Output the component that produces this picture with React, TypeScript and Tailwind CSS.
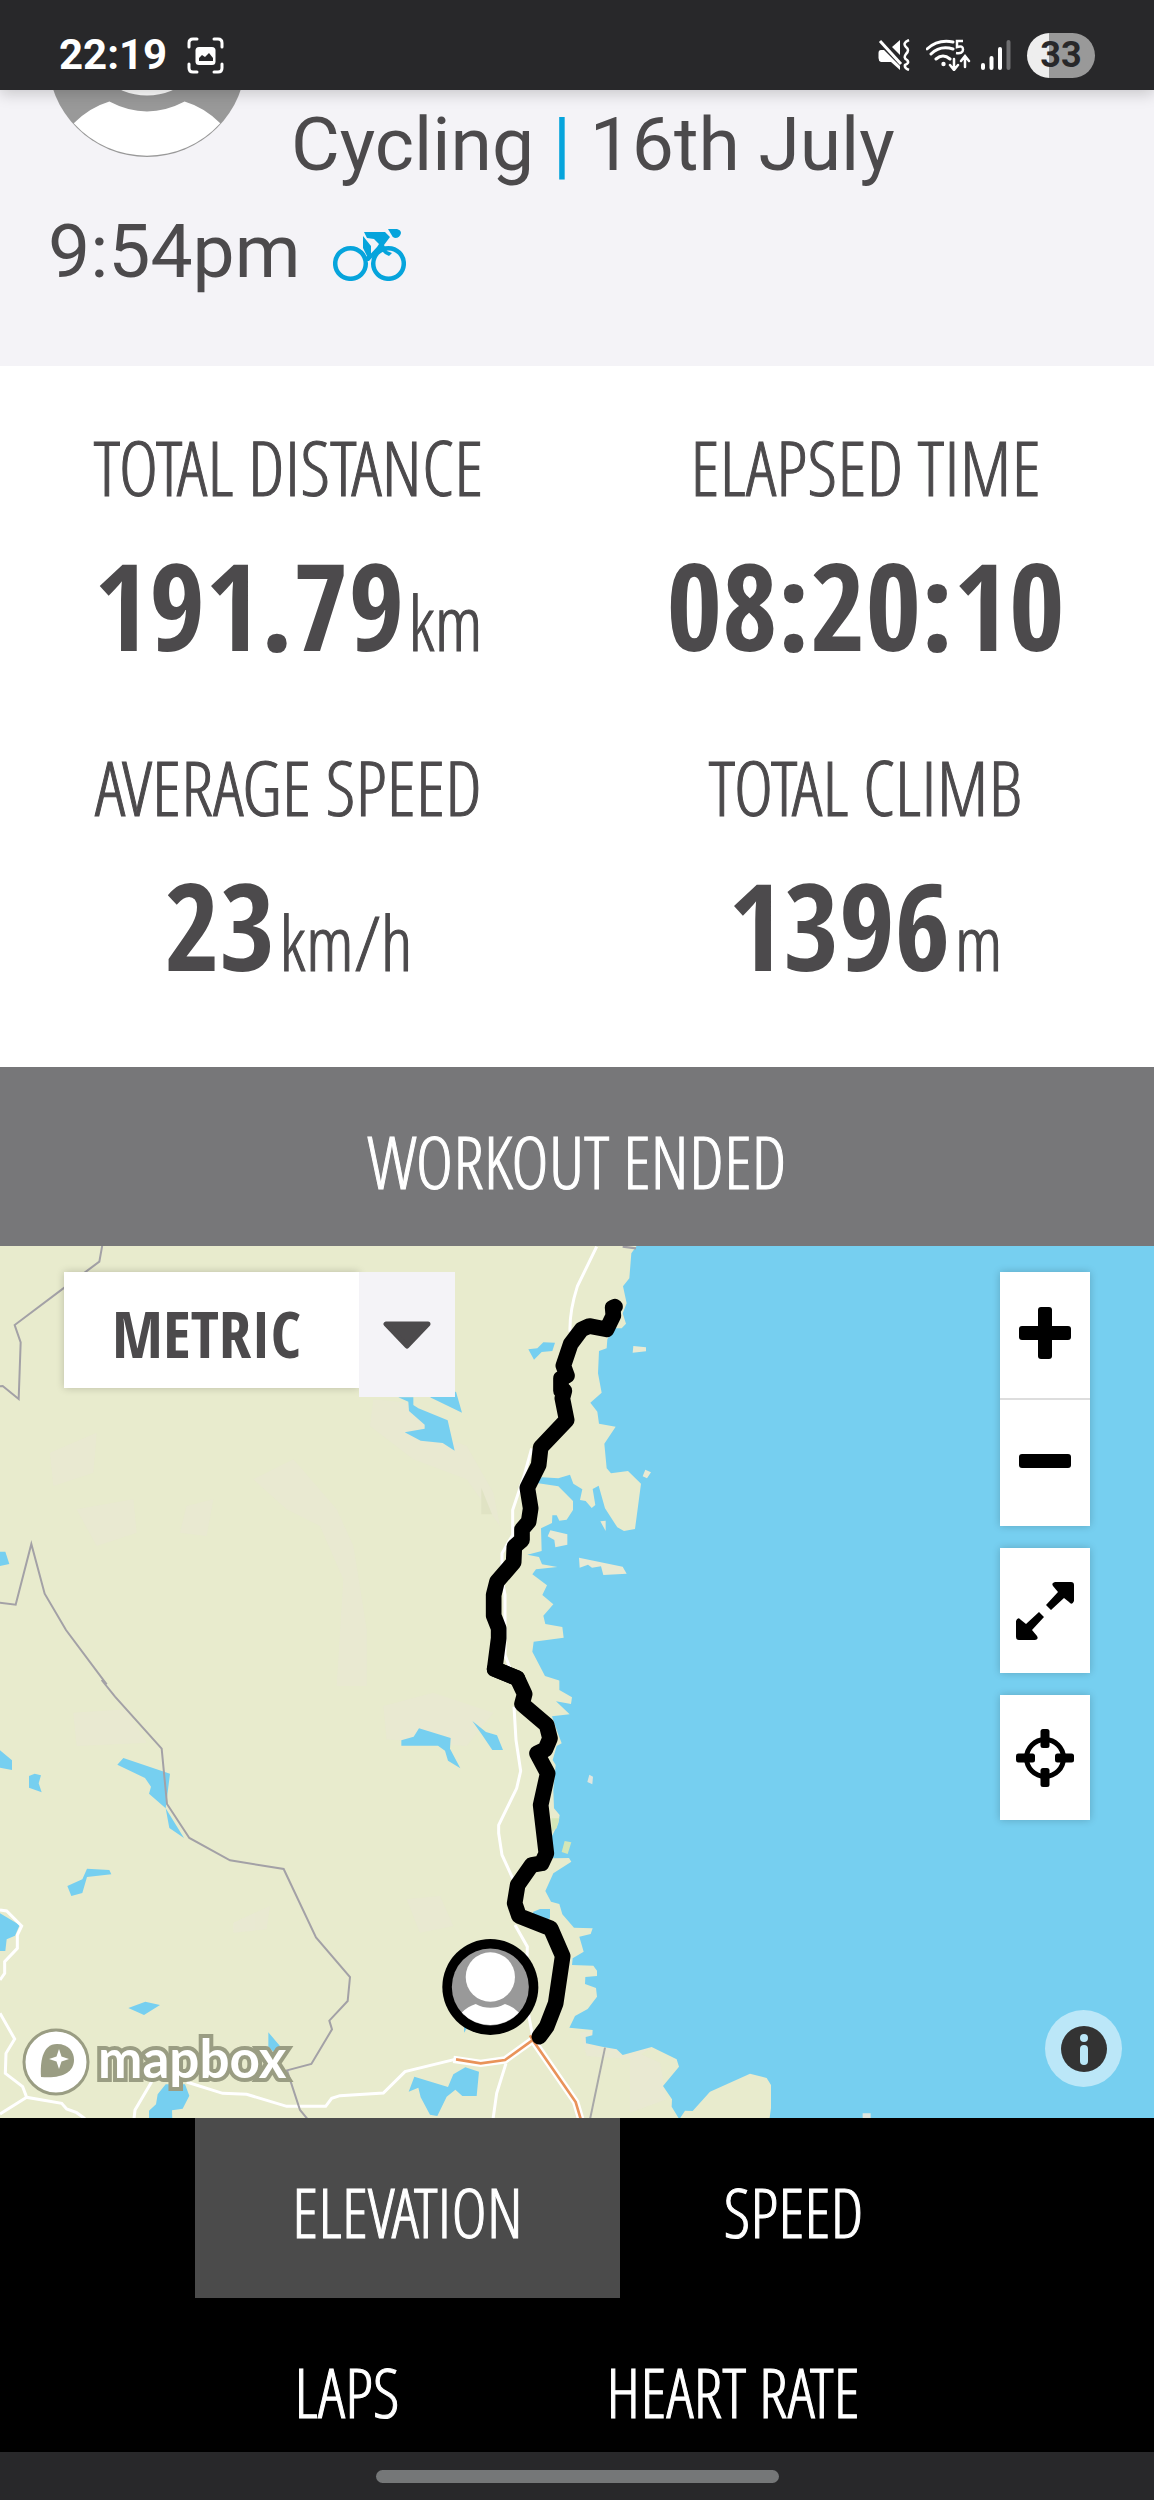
import { useState } from 'react'

const LIGHT = "font-['Open_Sans_Condensed_Light','Roboto_Condensed','Liberation_Sans_Narrow',sans-serif] font-light [-webkit-text-stroke:1px_currentColor]"
const BOLD = "font-['Open_Sans_Condensed','Roboto_Condensed','Liberation_Sans_Narrow',sans-serif] font-bold"

const stats = [
    { label: 'TOTAL DISTANCE', value: '191.79', unit: 'km' },
    { label: 'ELAPSED TIME', value: '08:20:10', unit: '' },
    { label: 'AVERAGE SPEED', value: '23', unit: 'km/h' },
    { label: 'TOTAL CLIMB', value: '1396', unit: 'm' },
]

const tabs = [
    { name: 'ELEVATION', size: 'w-[425px] h-[180px]' },
    { name: 'SPEED', size: 'w-[331px] h-[180px]' },
    { name: 'LAPS', size: 'w-[304px] h-[180px]' },
    { name: 'HEART RATE', size: 'w-[452px] h-[180px]' },
]

function AvatarShape() {
    return (
        <>
            <circle cx="50" cy="50" r="50" fill="#999999" />
            <circle cx="50" cy="37" r="32" fill="#ffffff" />
            <path d="M13 83Q21 75 31 72Q50 82 69 72Q79 75 87 83A50 50 0 0 1 13 83Z" fill="#ffffff" />
        </>
    )
}

function StatusBar() {
    return (
        <div className="relative z-10 h-[90px] px-[59px] pt-5 flex items-center justify-between
            bg-[#28282a] text-white shadow-[0_4px_14px_rgba(0,0,0,0.18)]">
            <div className="flex items-center gap-5">
                <span className="text-[42px] leading-[44px] font-bold">22:19</span>
                <svg viewBox="0 0 37 37" className="w-[37px] h-[37px]" fill="none">
                    <path
                        d="M2 10V6Q2 2 6 2H10M27 2H31Q35 2 35 6V10M35 27V31Q35 35 31 35H27M10 35H6Q2 35 2 31V27"
                        stroke="#fff" strokeWidth="3" strokeLinecap="round"
                    />
                    <rect x="8.500" y="10" width="20" height="18" rx="3.500" fill="#fff" />
                    <path d="M12 24V21L15 18L18 20L22 16L26 21V24Z" fill="#28282a" />
                </svg>
            </div>
            <div className="flex items-center">
                <svg viewBox="0 0 32 32" className="w-8 h-8 mr-4" fill="none">
                    <path d="M3 11H6L22 27V31L13 23H3Q0.500 22 0.500 19V14Q0.500 11 3 11ZM14 8L22 1V16Z" fill="#fff" />
                    <path d="M2 2L23 25" stroke="#fff" strokeWidth="3" />
                    <path
                        d="M31 1Q24 4 28 8Q32 11 28 15Q25 19 29 21Q32 24 27 26Q26 29 31 31"
                        stroke="#fff" strokeWidth="2.500"
                    />
                </svg>
                <svg viewBox="0 0 45 32" className="w-[45px] h-8 mr-[10px]" fill="none">
                    <path d="M1 10Q12 0 27 3M5 15Q14 6 27 10M10 20Q17 14 24 20" stroke="#fff" strokeWidth="3" strokeLinecap="round" />
                    <circle cx="17.500" cy="25" r="2.200" fill="#fff" />
                    <path d="M37 2H31V8Q37 6 37 10.500T30 14" stroke="#fff" strokeWidth="2.500" />
                    <path d="M28 20V30M24 26L28 31L32 26M39 28V18M35 22L39 17L43 22" stroke="#fff" strokeWidth="2.500" strokeLinecap="round" />
                </svg>
                <svg viewBox="0 0 30 32" className="w-[30px] h-8 mr-4" fill="none" strokeWidth="4" strokeLinecap="round">
                    <path d="M2 26V29M10.500 19V29M19 10V29" stroke="#fff" />
                    <path d="M27.500 3V29" stroke="#6f6f71" />
                </svg>
                <span className="w-[68px] h-[45px] rounded-full flex items-center justify-center
                    bg-linear-to-r from-[#eeeeee] from-33% to-[#999999] to-33%
                    text-[#28282a] text-[36px] leading-none font-bold">
                    33
                </span>
            </div>
        </div>
    )
}

function BikeIcon() {
    return (
        <svg viewBox="0 0 73 52" className="inline-block w-[73px] h-[52px] ml-8 align-[-4px]" fill="#06a4dc">
            <g fill="none" stroke="#06a4dc" strokeWidth="4.500">
                <circle cx="17.500" cy="34.500" r="15.300" />
                <circle cx="55.500" cy="34.500" r="15.300" />
            </g>
            <path d="M30 7L38 17V27L33 33L31 29L34 27L30 19Z" />
            <path d="M31 3H52L57 8L51 16L54 22L59 24L56 27L52 25L47 20L36 32L31 32L44 18L46 15L41 10L34 9Z" />
            <path d="M55 0H64Q68 1 68 4Q67 9 62 9Q59 8 58 5Z" />
        </svg>
    )
}

function WorkoutHeader() {
    return (
        <header className="bg-[#f4f3f7] pl-12 pr-12 pt-px pb-[61px]">
            <svg viewBox="0 0 100 100" className="float-left w-[198px] h-[198px] -mt-[132px] mr-[45px]">
                <AvatarShape />
            </svg>
            <h1 className="text-[75px] leading-[107px] text-[#4c4a4c]">
                <span>Cycling</span> <span className="text-[#06a4dc]">|</span> <span>16th July</span> <span>9:54pm</span>
                <BikeIcon />
            </h1>
        </header>
    )
}

function Stats() {
    return (
        <section className="grid grid-cols-2 pt-[61px] bg-white text-[#4c4a4c] text-center">
            {stats.map(({ label, value, unit }) => (
                <div key={label} className="h-[320px]">
                    <h2 className={`${LIGHT} text-[76px] leading-[80px]`}>{label}</h2>
                    <p className="leading-[140px] mt-7">
                        <span className={`${BOLD} text-[120px]`}>{value}</span>
                        {unit && <span className={`${LIGHT} text-[76px] ml-1`}>{unit}</span>}
                    </p>
                </div>
            ))}
        </section>
    )
}

function MapCanvas() {
    return (
        <svg viewBox="0 0 3462 2616" preserveAspectRatio="xMidYMid slice" className="w-full h-full">
            <rect width="3462" height="2616" fill="#e8ebcd" />
            {/* bare ground */}
            <g fill="#eae8d5" opacity="0.6">
                <path d="M760 700L880 640L1010 790L1060 900L1100 1150V1320H1010L1030 1000L960 840L860 790Z" />
                <path d="M1120 460L1230 470L1290 560L1400 600L1480 740L1500 840L1400 700L1240 640L1110 540Z" />
                <path d="M230 790L400 760L410 860L290 900ZM150 620L290 560L280 680L160 720ZM560 780L640 760L620 870L540 860Z" />
                <path d="M1150 1380L1300 1340L1480 1400L1400 1500L1160 1480ZM1220 1960L1320 1950L1360 2040L1260 2060Z" />
                <path d="M1740 2360L1900 2330L1960 2400L1900 2440L1760 2430ZM1890 2410L1980 2450L2000 2560L1890 2600Z" />
                <path d="M220 1400L380 1390L440 1490L230 1500ZM700 2030L810 1980L800 2050L700 2060Z" />
            </g>
            {/* north coast */}
            <g transform="translate(1200 -3)">
                <path
                    fill="#76cff0"
                    d="M712 0L694 25L688 100L669 124L680 175L668 205L678 236L665 250L640 250L622 283L620 310L597 318L594 385
                    L605 443L571 473L592 500L597 536L647 545L613 596L620 670L633 685L684 678L723 716L705 852L672 858L652 847
                    L615 790L596 722L578 732L586 780L575 789L557 768L540 765L547 733L520 716L510 689L475 700L425 697L410 714
                    L475 724L519 768V795L500 824L478 827L470 811H457L456 834L423 850L425 918L382 929L417 936L426 958L472 966
                    L408 973L397 988L441 1021L427 1050L460 1078L430 1112L436 1137L487 1146L491 1178L401 1190L397 1220
                    L435 1293L480 1307V1325H2262V0Z"
                />
                <path
                    fill="#e9ead3"
                    d="M700 303L738 307V319L698 323ZM736 674L753 682L741 700L728 694ZM601 829L617 827V858ZM451 856L502 868V899
                    L466 907L463 885L443 874ZM537 938L668 965L680 986L610 990L603 964L576 968L564 959L539 968Z"
                />
                <path
                    fill="#76cff0"
                    d="M385 313L412 310L430 292L465 293L457 318L425 321L402 344ZM90 457L168 440L186 503ZM-5 457H40V480L55 490
                    L143 526L164 617L128 594L62 587L14 562L74 551V539L27 498L25 470Z"
                />
                <path d="M590 5L532 124Q508 200 510 260M395 610L370 700L338 795V870L306 925V1000L315 1050V1230L330 1270" fill="none" stroke="#fff" strokeWidth="9" />
                <path d="M668 5L708 10" stroke="#a3a1a6" strokeWidth="7" />
                <path d="M244 728L276 808H244Z" fill="#e0e3c4" />
            </g>
            {/* south coast */}
            <g transform="translate(1200 1302)">
                <path
                    fill="#76cff0"
                    d="M478 0V30L516 52L513 72L468 64L509 103L456 109L470 150L485 190L470 198L458 240L467 255L460 330L462 385
                    L479 405L475 430L455 470L460 535L507 534L514 545L460 580L436 633L453 665L478 672L487 703L522 743L578 745
                    L572 762L538 770L551 815L518 835L516 855L580 857L591 872V888L556 891L555 912L588 924L591 950L563 987
                    L525 1008L508 1043L578 1050L577 1066L557 1071L558 1090L610 1101L650 1108L668 1125L755 1101L830 1138
                    L837 1160L789 1218L816 1258L815 1280L838 1318L855 1292L878 1293L930 1235L1050 1181L1100 1194
                    L1113 1215V1285L1108 1320H2262V0Z"
                />
                <path d="M568 284L579 290L577 313L562 306ZM1388 1300H1412V1320H1388Z" fill="#dfe6df" />
                <path d="M494 483L514 487L503 522L485 516ZM455 415H478L470 445L455 455Z" fill="#d3e7b8" />
                <path
                    fill="#76cff0"
                    d="M4 181L41 170L57 145L152 174L150 206L181 265L144 242L135 212L114 197H4ZM217 123L258 156L291 166L309 210
                    H277L245 163ZM400 695L420 687H450V715L430 725L395 710ZM43 1190L144 1221L160 1183L196 1162L237 1175L230 1248
                    H187L166 1229L140 1250L112 1308L90 1304L62 1252L55 1223L26 1235ZM192 1030H210L192 1058Z"
                />
                <path
                    d="M342 80L348 180L362 273L350 325L296 435V460L306 525L345 610M345 735L382 800L378 960L398 1070M165 1138
                    L15 1175L-50 1239L-180 1247L-205 1255L-223 1279H-340L-460 1243L-532 1240L-640 1206M318 1150L290 1240L279 1318"
                    fill="none" stroke="#fff" strokeWidth="9"
                />
                <path d="M160 1138L242 1150L315 1140L398 1080L527 1266L543 1320" fill="none" stroke="#fff" strokeWidth="22" />
                <path d="M168 1138L242 1150L315 1140L398 1080L390 1066M398 1080L527 1266L543 1320" fill="none" stroke="#e9935a" strokeWidth="8" />
                <path d="M615 1103L570 1318" stroke="#a8a8a8" strokeWidth="6" />
            </g>
            {/* inland north */}
            <g transform="translate(0 -3)" fill="none">
                <path
                    d="M307 0L298 50L190 130L44 240L62 292L56 462L8 423L-5 424M-5 1073L47 1079L94 897L134 1046L198 1155L320 1318"
                    stroke="#a3a1a6" strokeWidth="6"
                />
                <path d="M0 920H16L28 957L0 963Z" fill="#76cff0" />
            </g>
            {/* inland south */}
            <g transform="translate(0 1302)">
                <path
                    fill="#76cff0"
                    d="M0 211L36 241V270L0 263ZM87 288L104 281L123 286L116 310L125 337L87 323ZM370 234L510 281L497 385L552 474
                    L508 444L497 385L447 341L453 320L435 294L352 254ZM261 566L328 570L334 583L261 591L247 639L214 648L202 618
                    L247 598ZM0 700L59 735L45 767L20 778L16 813H0ZM385 984L436 965L480 975L432 1005ZM805 1057L850 1110L835 1130
                    L805 1100ZM497 1213H555L568 1247L548 1286L516 1291L517 1320H447V1292L468 1273L473 1243Z"
                />
                <path
                    d="M0 690L20 693L65 738L52 765V805L14 845V880L0 900M0 1000L44 1077L18 1120L16 1180L68 1220L80 1252
                    L185 1270L200 1287L230 1298L255 1316M0 1302L80 1252M455 1205L405 1290L402 1316"
                    fill="none" stroke="#fff" strokeWidth="9"
                />
                <path
                    d="M305 0L345 50L485 206L501 372L568 474L690 541L851 567L948 772L1050 891L1043 963L988 1022L996 1048L934 1152
                    L861 1171L900 1290L925 1320"
                    fill="none" stroke="#a3a1a6" strokeWidth="6"
                />
            </g>
            {/* recorded track */}
            <g fill="none" stroke="#000" strokeWidth="47" strokeLinecap="round" strokeLinejoin="round">
                <path
                    transform="translate(1200 -3)"
                    d="M645 185L638 188L640 212L620 253L568 243L545 253L512 297L490 362L501 392L483 400V437L493 437L487 460L500 525
                    L422 607L416 660L382 728L392 790L386 830L366 853V885L343 905L341 952L291 1010L281 1050V1112L296 1150V1180
                    L284 1272L352 1300"
                />
                <path
                    transform="translate(1200 1302)"
                    d="M284 -33L352 -5L374 42L366 72L440 135L450 175L436 208L411 220L443 280L422 375L439 520L425 550L395 555
                    L353 615L344 670L357 708L452 745L488 828L467 970L440 1040L418 1070"
                />
            </g>
            <circle cx="1471" cy="2223" r="144" />
            <g transform="translate(1355.500 2107.500) scale(2.310)">
                <AvatarShape />
            </g>
        </svg>
    )
}

const controlButton = 'w-[90px] h-[125px] flex items-center justify-center bg-white'

function WorkoutMap() {
    return (
        <section className="relative h-[872px] overflow-hidden">
            <MapCanvas />

            <div className="absolute left-16 top-[26px] flex items-start">
                <select
                    aria-label="Units"
                    className={`${BOLD} appearance-none w-[295px] h-[116px] pl-12 pt-2 rounded-none bg-white
                        text-[65px] text-[#4c4a4c] outline-none shadow-[0_0_8px_rgba(0,0,0,0.2)]`}
                >
                    <option>METRIC</option>
                    <option>IMPERIAL</option>
                </select>
                <div className="w-24 h-[125px] flex items-center justify-center bg-[#f4f3f7] pointer-events-none">
                    <svg viewBox="0 0 48 28" className="w-12 h-7">
                        <path d="M3 3H45L24 25Z" fill="#4c4a4c" stroke="#4c4a4c" strokeWidth="5" strokeLinejoin="round" />
                    </svg>
                </div>
            </div>

            <div className="absolute right-16 top-[26px] flex flex-col gap-[22px]">
                <div className="flex flex-col shadow-[0_0_8px_rgba(0,0,0,0.2)]">
                    <button
                        aria-label="Zoom in"
                        className="w-[90px] h-32 pb-1 flex items-center justify-center bg-white border-b-2 border-[#dddddd]"
                    >
                        <svg viewBox="0 0 52 52" className="w-[52px] h-[52px]">
                            <rect x="19" width="14" height="52" rx="3" />
                            <rect y="19" width="52" height="14" rx="3" />
                        </svg>
                    </button>
                    <button aria-label="Zoom out" className="w-[90px] h-[126px] pb-1 flex items-center justify-center bg-white">
                        <svg viewBox="0 0 52 52" className="w-[52px] h-[52px]">
                            <rect y="19" width="52" height="14" rx="3" />
                        </svg>
                    </button>
                </div>
                <button aria-label="Fullscreen" className={`${controlButton} shadow-[0_0_8px_rgba(0,0,0,0.2)]`}>
                    <svg viewBox="0 0 58 58" className="w-[58px] h-[58px]">
                        <path d="M39 0H55Q58 0 58 3V19Q56 24 53 20L48 16L35 28L30 23L42 10L37 4Q35 1 39 0Z" />
                        <path d="M39 0H55Q58 0 58 3V19Q56 24 53 20L48 16L35 28L30 23L42 10L37 4Q35 1 39 0Z" transform="rotate(180 29 29)" />
                    </svg>
                </button>
                <button aria-label="Find route" className={`${controlButton} shadow-[0_0_8px_rgba(0,0,0,0.2)]`}>
                    <svg viewBox="0 0 58 58" className="w-[58px] h-[58px]">
                        <circle cx="29" cy="29" r="18.500" fill="none" stroke="#000" strokeWidth="5" />
                        <rect x="24.500" width="9" height="19" rx="2.500" />
                        <rect x="24.500" y="39" width="9" height="19" rx="2.500" />
                        <rect y="24.500" width="19" height="9" rx="2.500" />
                        <rect x="39" y="24.500" width="19" height="9" rx="2.500" />
                    </svg>
                </button>
            </div>

            <a href="#mapbox" className="absolute left-[22px] bottom-[22px] flex items-center gap-2">
                <svg viewBox="0 0 68 68" className="w-[68px] h-[68px]">
                    <circle cx="34" cy="34" r="32" fill="#fff" stroke="#9a9d83" strokeWidth="3" />
                    <path d="M19 49C18 35 20 16 35 16C47 16 52 24 52 32C52 44 40 51 19 49Z" fill="#9a9d83" />
                    <path d="M37 21L39.500 28.500L47 31L39.500 33.500L37 41L34.500 33.500L27 31L34.500 28.500Z" fill="#fff" />
                </svg>
                <span className="font-['Lato',sans-serif] text-[53px] leading-[60px] pb-2 font-bold text-white
                    [-webkit-text-stroke:8px_#9a9d83] [paint-order:stroke_fill]">
                    mapbox
                </span>
            </a>

            <button aria-label="Map attribution" className="absolute right-8 bottom-[31px] w-[77px] h-[77px] rounded-full
                bg-white/50 flex items-center justify-center">
                <svg viewBox="0 0 46 46" className="w-[46px] h-[46px]">
                    <circle cx="23" cy="23" r="23" fill="#333" />
                    <circle cx="23" cy="12" r="4" fill="#bae7f7" />
                    <rect x="19" y="19" width="8" height="20" rx="4" fill="#bae7f7" />
                </svg>
            </button>
        </section>
    )
}

export default function App() {
    const [active, setActive] = useState('ELEVATION')

    return (
        <div className="min-h-screen flex flex-col bg-black font-['Roboto',sans-serif]">
            <StatusBar />
            <WorkoutHeader />
            <Stats />
            <div className={`${LIGHT} h-[179px] flex items-center justify-center pt-2
                bg-[#777779] text-white text-[72px] leading-[80px]`}>
                WORKOUT ENDED
            </div>
            <WorkoutMap />
            <nav className="h-[334px] overflow-hidden flex flex-wrap justify-center gap-x-2 px-32 bg-black">
                {tabs.map(({ name, size }) => (
                    <button
                        key={name}
                        onClick={() => setActive(name)}
                        className={`${LIGHT} ${size} pt-2 text-white text-[68px] leading-[72px]
                            ${active === name ? 'bg-[#4b4b4b]' : 'bg-black'}`}
                    >
                        {name}
                    </button>
                ))}
            </nav>
            <footer className="h-12 flex justify-center items-center bg-[#28282a]">
                <div className="w-[403px] h-[13px] rounded-full bg-[#757778]" />
            </footer>
        </div>
    )
}
